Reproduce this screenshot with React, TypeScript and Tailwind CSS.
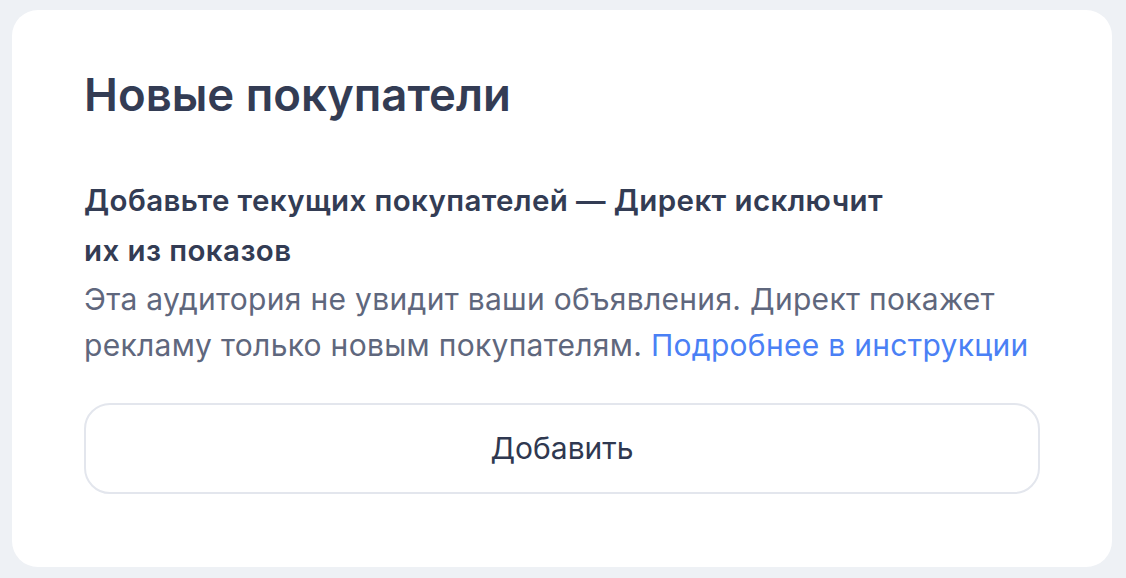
export default function App() {
  return (
    <div
      className="min-h-[578px] w-[1126px] bg-[#eef1f5] pt-[10px] pl-[12px] pr-[14px] pb-[12px]"
      style={{ fontFamily: 'Inter, "Noto Sans", sans-serif' }}
    >
      <div className="flex flex-col rounded-[26px] bg-white px-[72px] pt-[57px] pb-[73px]">
        <h1 className="text-[45.5px] font-semibold leading-[56px] text-[#333c54]">
          Новые покупатели
        </h1>
        <p className="mt-[52px] max-w-[830px] text-[29.5px] font-semibold leading-[50px] tracking-[0.4px] text-[#333c54]">
          Добавьте текущих покупателей — Директ исключит их из показов
        </p>
        <p className="mt-[1px] text-[30px] leading-[46px] tracking-[0.3px] text-[#5f677d]">
          Эта аудитория не увидит ваши объявления. Директ покажет рекламу только новым покупателям.{' '}
          <a className="text-[#4a80f5]">Подробнее в инструкции</a>
        </p>
        <button className="mt-[35px] h-[91px] w-full rounded-[26px] border-2 border-[#e3e6ed] bg-white text-[30px] text-[#2f3850]">
          Добавить
        </button>
      </div>
    </div>
  );
}
